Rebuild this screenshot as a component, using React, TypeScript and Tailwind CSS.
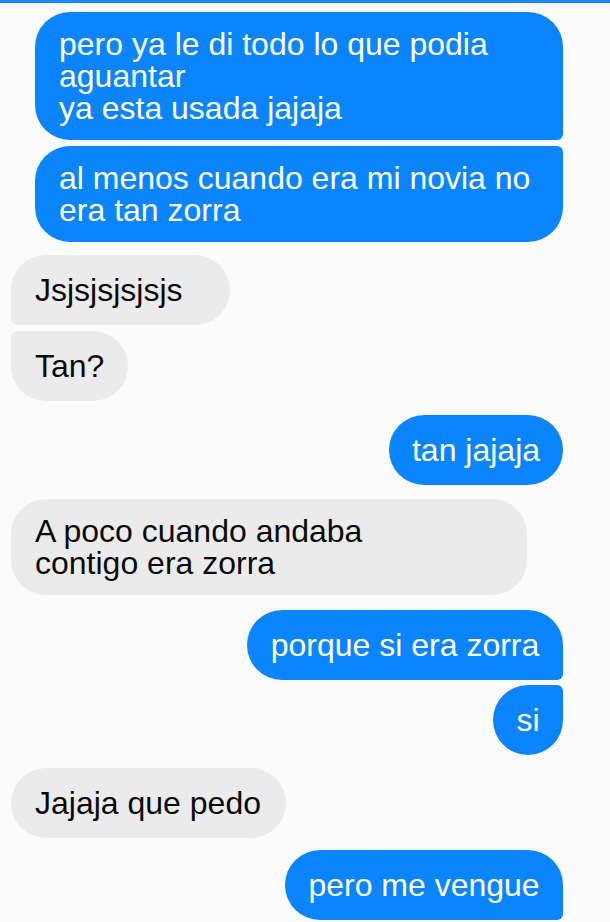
const msgs: { me: boolean; lines: string[]; w: string; r: string; gap: string }[] = [
  { me: true, lines: ["pero ya le di todo lo que podia", "aguantar", "ya esta usada jajaja"], w: "w-[528px]", r: "rounded-[35px] rounded-br-[6px]", gap: "mt-[9px]" },
  { me: true, lines: ["al menos cuando era mi novia no", "era tan zorra"], w: "w-[528px]", r: "rounded-[35px] rounded-tr-[6px]", gap: "mt-[6px]" },
  { me: false, lines: ["Jsjsjsjsjsjs"], w: "w-[219px]", r: "rounded-[35px] rounded-bl-[6px]", gap: "mt-[13px]" },
  { me: false, lines: ["Tan?"], w: "w-[117px]", r: "rounded-[35px] rounded-tl-[6px]", gap: "mt-[6px]" },
  { me: true, lines: ["tan jajaja"], w: "w-[174px]", r: "rounded-[35px]", gap: "mt-[14px]" },
  { me: false, lines: ["A poco cuando andaba", "contigo era zorra"], w: "w-[516px]", r: "rounded-[35px]", gap: "mt-[14px]" },
  { me: true, lines: ["porque si era zorra"], w: "w-[316px]", r: "rounded-[35px] rounded-br-[6px]", gap: "mt-[15px]" },
  { me: true, lines: ["si"], w: "w-[70px]", r: "rounded-[35px] rounded-tr-[6px]", gap: "mt-[5px]" },
  { me: false, lines: ["Jajaja que pedo"], w: "w-[275px]", r: "rounded-[35px]", gap: "mt-[13px]" },
  { me: true, lines: ["pero me vengue"], w: "w-[278px]", r: "rounded-[35px] rounded-br-[6px]", gap: "mt-[12px]" },
];

export default function App() {
  return (
    <div className="w-[610px] h-[922px] overflow-hidden bg-[#fbfbfb] font-['Liberation_Sans',Arial,sans-serif]">
      <div className="h-[3px] bg-[#1688f0]" />
      <div className="flex flex-col pl-[11px] pr-[47px]">
        {msgs.map((m, i) => (
          <div
            key={i}
            className={`${m.gap} ${m.w} ${m.r} min-h-[70px] flex flex-col justify-center px-[24px] py-[16px] text-[32px] leading-[32px] ${
              m.me ? "self-end bg-[#0b85fd] text-white" : "self-start bg-[#ebebeb] text-[#0a0a0a]"
            } ${m.lines.length === 1 && m.me ? "items-center" : ""}`}
          >
            {m.lines.map((l, j) => (
              <span key={j} className="whitespace-nowrap">
                {l}
              </span>
            ))}
          </div>
        ))}
      </div>
    </div>
  );
}
